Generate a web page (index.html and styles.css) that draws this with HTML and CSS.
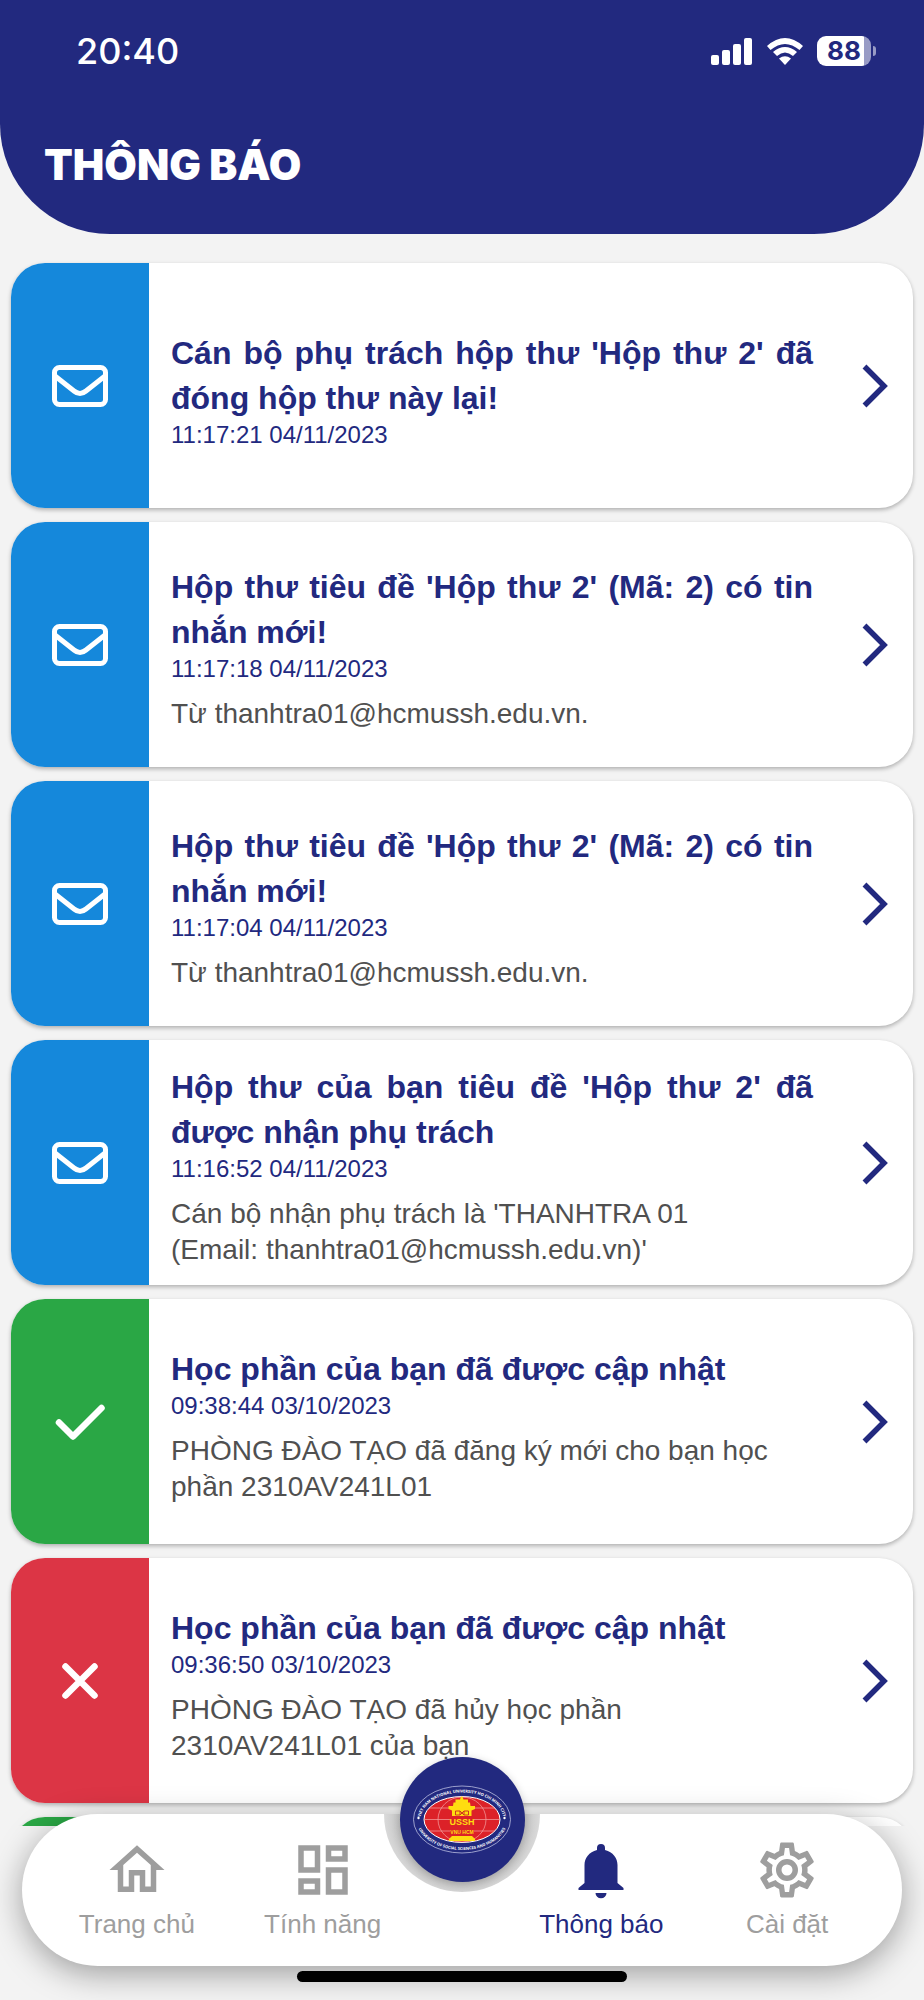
FILE: index.html
```html
<!DOCTYPE html>
<html lang="vi">
<head>
<meta charset="utf-8">
<meta name="viewport" content="width=device-width, initial-scale=1">
<title>Thông báo</title>
<link rel="stylesheet" href="styles.css">
</head>
<body>
<svg class="defs" aria-hidden="true">
  <symbol id="mail" viewBox="0 0 56 42">
    <rect x="2.500" y="2.500" width="51" height="37" rx="5" fill="none" stroke="currentColor" stroke-width="5"/>
    <path d="M3 11L22 26Q28 31 34 26L53 11" fill="none" stroke="currentColor" stroke-width="5"/>
  </symbol>
  <symbol id="check" viewBox="0 0 56 42">
    <path d="M7 21.500L21 35.500L49.500 7" fill="none" stroke="currentColor" stroke-width="6.500" stroke-linecap="round" stroke-linejoin="round"/>
  </symbol>
  <symbol id="cross" viewBox="0 0 56 42">
    <path d="M13.500 6.500L42.500 35.500M42.500 6.500L13.500 35.500" fill="none" stroke="currentColor" stroke-width="6.500" stroke-linecap="round"/>
  </symbol>
  <symbol id="chevron" viewBox="0 0 26 44">
    <path d="M2.500 2.500L22 22L2.500 41.500" fill="none" stroke="currentColor" stroke-width="5.500"/>
  </symbol>
</svg>

<div class="screen">
  <header class="header">
    <div class="status">
      <time class="clock">20:40</time>
      <div class="status-icons">
        <svg class="signal" viewBox="0 0 42 27" aria-hidden="true">
          <rect x="0" y="17" width="8" height="10" rx="2"/>
          <rect x="11" y="12" width="8" height="15" rx="2"/>
          <rect x="22" y="6" width="8" height="21" rx="2"/>
          <rect x="33" y="0" width="8" height="27" rx="2"/>
        </svg>
        <svg class="wifi" viewBox="0 0 36 27" aria-hidden="true">
          <path d="M0 8Q18 -8 36 8L32.500 12Q18 0 3.500 12Z"/>
          <path d="M6 14Q18 4 30 14L26 18Q18 11 10 18Z"/>
          <path d="M12 20.500Q18 16 24 20.500L18 27Z"/>
        </svg>
        <div class="battery"><span class="level">88</span></div>
      </div>
    </div>
    <h1 class="page-title">THÔNG BÁO</h1>
  </header>

  <main class="list">
    <a class="card" href="#">
      <span class="kind mail"><svg class="kind-icon"><use href="#mail"/></svg></span>
      <span class="body">
        <strong class="title">Cán bộ phụ trách hộp thư 'Hộp thư 2' đã đóng hộp thư này lại!</strong>
        <time class="time">11:17:21 04/11/2023</time>
      </span>
      <svg class="chevron"><use href="#chevron"/></svg>
    </a>
    <a class="card" href="#">
      <span class="kind mail"><svg class="kind-icon"><use href="#mail"/></svg></span>
      <span class="body">
        <strong class="title">Hộp thư tiêu đề 'Hộp thư 2' (Mã: 2) có tin nhắn mới!</strong>
        <time class="time">11:17:18 04/11/2023</time>
        <span class="text">Từ thanhtra01@hcmussh.edu.vn.</span>
      </span>
      <svg class="chevron"><use href="#chevron"/></svg>
    </a>
    <a class="card" href="#">
      <span class="kind mail"><svg class="kind-icon"><use href="#mail"/></svg></span>
      <span class="body">
        <strong class="title">Hộp thư tiêu đề 'Hộp thư 2' (Mã: 2) có tin nhắn mới!</strong>
        <time class="time">11:17:04 04/11/2023</time>
        <span class="text">Từ thanhtra01@hcmussh.edu.vn.</span>
      </span>
      <svg class="chevron"><use href="#chevron"/></svg>
    </a>
    <a class="card" href="#">
      <span class="kind mail"><svg class="kind-icon"><use href="#mail"/></svg></span>
      <span class="body">
        <strong class="title">Hộp thư của bạn tiêu đề 'Hộp thư 2' đã được nhận phụ trách</strong>
        <time class="time">11:16:52 04/11/2023</time>
        <span class="text">Cán bộ nhận phụ trách là 'THANHTRA 01<br>(Email: thanhtra01@hcmussh.edu.vn)'</span>
      </span>
      <svg class="chevron"><use href="#chevron"/></svg>
    </a>
    <a class="card" href="#">
      <span class="kind done"><svg class="kind-icon"><use href="#check"/></svg></span>
      <span class="body">
        <strong class="title">Học phần của bạn đã được cập nhật</strong>
        <time class="time">09:38:44 03/10/2023</time>
        <span class="text">PHÒNG ĐÀO TẠO đã đăng ký mới cho bạn học<br>phần 2310AV241L01</span>
      </span>
      <svg class="chevron"><use href="#chevron"/></svg>
    </a>
    <a class="card" href="#">
      <span class="kind cancelled"><svg class="kind-icon"><use href="#cross"/></svg></span>
      <span class="body">
        <strong class="title">Học phần của bạn đã được cập nhật</strong>
        <time class="time">09:36:50 03/10/2023</time>
        <span class="text">PHÒNG ĐÀO TẠO đã hủy học phần<br>2310AV241L01 của bạn</span>
      </span>
      <svg class="chevron"><use href="#chevron"/></svg>
    </a>
    <div class="card"><span class="kind done"></span></div>
  </main>

  <footer class="footer">
    <nav class="tabs">
      <a class="tab" href="#">
        <svg class="tab-icon" viewBox="0 0 24 24" aria-hidden="true"><path d="M12 5.690L17 10.190V18H15V12H9V18H7V10.190L12 5.690M12 3L2 12H5V20H11V14H13V20H19V12H22Z"/></svg>
        <span>Trang chủ</span>
      </a>
      <a class="tab" href="#">
        <svg class="tab-icon" viewBox="0 0 24 24" aria-hidden="true"><path d="M19,5V7H15V5H19M9,5V11H5V5H9M19,13V19H15V13H19M9,17V19H5V17H9M21,3H13V9H21V3M11,3H3V13H11V3M21,11H13V21H21V11M11,15H3V21H11V15Z"/></svg>
        <span>Tính năng</span>
      </a>
      <div class="center">
        <svg class="notch" viewBox="0 0 156 78" aria-hidden="true">
          <defs><radialGradient id="shade" cx="78" cy="4" r="78" gradientUnits="userSpaceOnUse"><stop offset=".78" stop-color="#c2c2c2"/><stop offset="1" stop-color="#dadada"/></radialGradient></defs>
          <path d="M0 0H156A78 78 0 0 1 0 0Z" fill="url(#shade)"/>
        </svg>
        <a class="logo" href="#" aria-label="USSH">
          <svg class="seal" viewBox="0 0 125 125">
            <defs>
              <path id="arc-top" d="M20.500 62.500A41.500 27 0 0 1 103.500 62.500"/>
              <path id="arc-bottom" d="M16.500 62.500A45.500 30.500 0 0 0 107.500 62.500"/>
            </defs>
            <ellipse cx="62" cy="62.500" rx="48.500" ry="33.500" fill="none" stroke="#b9bde0" stroke-width=".8"/>
            <ellipse cx="62" cy="62.500" rx="38" ry="23" fill="#dc2128" stroke="#fff" stroke-width="1"/>
            <g fill="none" stroke="#f4a3a3" stroke-width=".7">
              <ellipse cx="62" cy="62.500" rx="24" ry="22.500"/>
              <path d="M24 62.500H100M29 51H95M29 74H95"/>
            </g>
            <path fill="#ffdc10" d="M61 39.500H62.500L63.500 42.500H68V45.500H70L70.500 49H75V52L71.500 53.500V59H52V53.500L48.500 52V49H53L53.500 45.500H55.500V42.500H60Z"/>
            <path d="M55.500 54H60V58H55.500ZM64 54H68.500V58H64ZM60 54L64 58M64 54L60 58" fill="none" stroke="#c22" stroke-width=".9"/>
            <path fill="#dc2128" d="M50 60H74V78.500H50Z"/>
            <path fill="#ffdc10" d="M52 79H72L75 82V84H49V82Z"/>
            <text x="62" y="68" class="seal-name">USSH</text>
            <text x="62" y="77" class="seal-sub">VNU HCM</text>
            <text class="seal-ring"><textPath href="#arc-top" startOffset="50%">VIET NAM NATIONAL UNIVERSITY HO CHI MINH CITY</textPath></text>
            <text class="seal-ring"><textPath href="#arc-bottom" startOffset="50%">UNIVERSITY OF SOCIAL SCIENCES AND HUMANITIES</textPath></text>
            <circle cx="18.500" cy="61" r="1.200" fill="#fff"/><circle cx="104.500" cy="61" r="1.200" fill="#fff"/>
          </svg>
        </a>
      </div>
      <a class="tab active" href="#" aria-current="page">
        <svg class="tab-icon" viewBox="0 0 66 66" aria-hidden="true"><path d="M29 13V11A4 4 0 0 1 37 11V13C45 15 49.500 21 49.500 28V46L55.500 51V53H10.500V51L16.500 46V28C16.500 21 21 15 29 13ZM27.500 56H38.500A5.500 5.200 0 0 1 27.500 56Z"/></svg>
        <span>Thông báo</span>
      </a>
      <a class="tab" href="#">
        <svg class="tab-icon" viewBox="0 0 24 24" aria-hidden="true"><path d="M12,8A4,4 0 0,1 16,12A4,4 0 0,1 12,16A4,4 0 0,1 8,12A4,4 0 0,1 12,8M12,10A2,2 0 0,0 10,12A2,2 0 0,0 12,14A2,2 0 0,0 14,12A2,2 0 0,0 12,10M10,22C9.750,22 9.540,21.820 9.500,21.580L9.130,18.930C8.500,18.680 7.960,18.340 7.440,17.940L4.950,18.950C4.730,19.030 4.460,18.950 4.340,18.730L2.340,15.270C2.210,15.050 2.270,14.780 2.460,14.630L4.570,12.970L4.500,12L4.570,11L2.460,9.370C2.270,9.220 2.210,8.950 2.340,8.730L4.340,5.270C4.460,5.050 4.730,4.960 4.950,5.050L7.440,6.050C7.960,5.660 8.500,5.320 9.130,5.070L9.500,2.420C9.540,2.180 9.750,2 10,2H14C14.250,2 14.460,2.180 14.500,2.420L14.870,5.070C15.500,5.320 16.040,5.660 16.560,6.050L19.050,5.050C19.270,4.960 19.540,5.050 19.660,5.270L21.660,8.730C21.790,8.950 21.730,9.220 21.540,9.370L19.430,11L19.500,12L19.430,13L21.540,14.630C21.730,14.780 21.790,15.050 21.660,15.270L19.660,18.730C19.540,18.950 19.270,19.040 19.050,18.950L16.560,17.950C16.040,18.340 15.500,18.680 14.870,18.930L14.500,21.580C14.460,21.820 14.250,22 14,22H10M11.250,4L10.880,6.610C9.680,6.860 8.620,7.500 7.850,8.390L5.440,7.350L4.690,8.650L6.800,10.200C6.400,11.370 6.400,12.640 6.800,13.800L4.680,15.360L5.430,16.660L7.860,15.620C8.630,16.500 9.680,17.140 10.870,17.380L11.240,20H12.760L13.130,17.390C14.320,17.140 15.370,16.500 16.140,15.620L18.570,16.660L19.320,15.360L17.200,13.810C17.600,12.640 17.600,11.370 17.200,10.200L19.310,8.650L18.560,7.350L16.150,8.390C15.380,7.500 14.320,6.860 13.120,6.620L12.750,4H11.250Z"/></svg>
        <span>Cài đặt</span>
      </a>
    </nav>
    <div class="home-bar"></div>
  </footer>
</div>
</body>
</html>
```
FILE: styles.css
```css
* { box-sizing: border-box; }

body {
  margin: 0;
  background: #f3f3f3;
  font-family: "Liberation Sans", Arial, sans-serif;
}

a { color: inherit; text-decoration: none; }
svg { display: block; }
.defs { display: none; }

.screen {
  display: flex;
  flex-direction: column;
  height: 100vh;
  overflow: hidden;
}

/* Header */
.header {
  flex: none;
  padding: 28px 44px 44px;
  background: #22297f;
  color: #fff;
  border-radius: 0 0 110px 110px;
}
.status {
  display: flex;
  justify-content: space-between;
  align-items: center;
  height: 46px;
  padding: 0 3px 0 32px;
}
.clock { font: 500 36px/46px Inter, sans-serif; }
.status-icons { display: flex; align-items: center; gap: 14px; }
.signal { width: 42px; height: 27px; fill: #fff; }
.wifi { width: 36px; height: 27px; fill: #fff; }
.battery {
  position: relative;
  width: 54px;
  height: 30px;
  margin-right: 6px;
  border-radius: 9px;
  background: linear-gradient(90deg, #fff 87%, #989bc5 87%);
}
.battery::after {
  content: "";
  position: absolute;
  right: -5px;
  top: 10px;
  width: 3px;
  height: 10px;
  border-radius: 0 3px 3px 0;
  background: #989bc5;
}
.level {
  display: block;
  color: #22297f;
  font: 700 26px/30px Inter, sans-serif;
  text-align: center;
}
.page-title {
  margin: 66px 0 0;
  font: 900 42px/50px Inter, sans-serif;
}

/* Notifications */
.list {
  flex: 1;
  min-height: 0;
  overflow: hidden;
  display: flex;
  flex-direction: column;
  gap: 14px;
  padding: 29px 11px 0;
}
.card {
  flex: none;
  display: flex;
  align-items: center;
  min-height: 245px;
  padding-right: 25px;
  border-radius: 34px;
  background: #fff;
  box-shadow: 0 2px 4px rgba(0, 0, 0, .28);
}
.kind {
  align-self: stretch;
  flex: none;
  display: flex;
  align-items: center;
  justify-content: center;
  width: 138px;
  border-radius: 34px 0 0 34px;
  color: #fff;
}
.kind.mail { background: #1588db; }
.kind.done { background: #2aa745; }
.kind.cancelled { background: #dc3545; }
.kind-icon { width: 56px; height: 42px; }
.body {
  flex: 1;
  display: flex;
  flex-direction: column;
  padding: 8px 49px 0 22px;
}
.title {
  color: #22297f;
  font-size: 32px;
  line-height: 45px;
  text-align: justify;
}
.time {
  color: #22297f;
  font-size: 24px;
  line-height: 28px;
}
.text {
  margin-top: 13px;
  color: #505050;
  font-size: 28px;
  line-height: 36px;
}
.chevron { flex: none; width: 26px; height: 44px; color: #22297f; }

/* Bottom navigation */
.footer { flex: none; position: relative; padding: 0 22px 18px; }
.tabs {
  display: grid;
  grid-template-columns: 2fr 2fr 1fr 2fr 2fr;
  height: 152px;
  margin-top: -12px;
  padding: 0 22px;
  border-radius: 76px;
  background: #fff;
  box-shadow: 0 8px 32px rgba(0, 0, 0, .35);
}
.tab {
  display: flex;
  flex-direction: column;
  align-items: center;
  gap: 6px;
  padding-top: 23px;
  color: #9e9e9e;
  font-size: 26px;
  line-height: 30px;
}
.tab.active { color: #22297f; }
.tab-icon { width: 66px; height: 66px; fill: currentColor; }
.center { position: relative; }
.notch {
  position: absolute;
  left: 50%;
  top: 0;
  width: 156px;
  margin-left: -78px;
}
.logo {
  position: absolute;
  left: 50%;
  top: -57px;
  width: 125px;
  height: 125px;
  margin-left: -62px;
  border-radius: 50%;
  background: #22297f;
  box-shadow: 0 2px 8px rgba(0, 0, 0, .2);
}
.seal { width: 125px; height: 125px; }
.seal-name, .seal-sub {
  fill: #ffdc10;
  font-family: "Liberation Sans Narrow", "Liberation Sans", sans-serif;
  font-weight: 700;
  text-anchor: middle;
}
.seal-name { font-size: 9px; }
.seal-sub { font-size: 5px; }
.seal-ring { fill: #fff; font: 700 4px "Open Sans", sans-serif; text-anchor: middle; }
.home-bar {
  width: 38%;
  max-width: 330px;
  height: 11px;
  margin: 5px auto 0;
  border-radius: 6px;
  background: #000;
}
```
